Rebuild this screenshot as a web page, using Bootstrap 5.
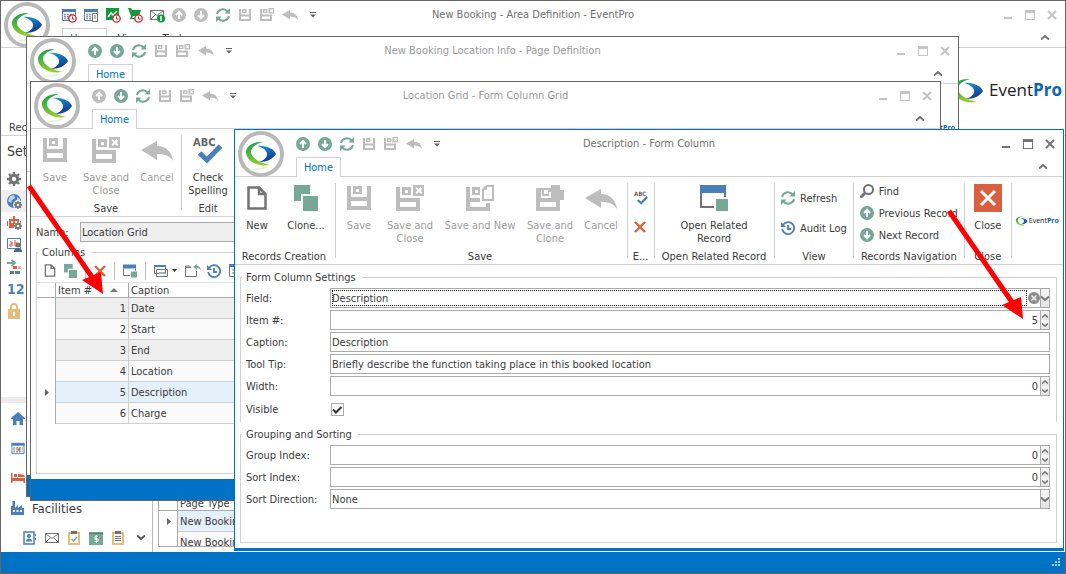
<!DOCTYPE html>
<html lang="en">
<head>
<meta charset="utf-8">
<meta name="viewport" content="width=device-width, initial-scale=1">
<title>EventPro</title>
<link href="https://cdn.jsdelivr.net/npm/bootstrap@5.3.0/dist/css/bootstrap.min.css" rel="stylesheet">
<style>
:root{--accent:#0072c6;--ink:#3b3b3b;--line:#d2d2d2;--edge:#ababab;--frame:#666;--blue:#4a80b8}
body{font-family:"DejaVu Sans Condensed","DejaVu Sans",sans-serif;font-size:11px;line-height:13px;color:var(--ink);overflow:hidden}
button{font:inherit;color:inherit;border:0;background:none;padding:0}
button:disabled{color:#9c9c9c}
svg{display:block;flex:none;overflow:visible}
.win{background:#fff;border:1px solid var(--frame)}
.win-area{position:relative}
.win-page{position:absolute;inset:35px 106px 76px 25px}
.win-grid{position:absolute;inset:80px 124px 72px 29px}
.win-form{position:absolute;inset:128px 1px 22px 233px;border-color:var(--accent)}
.orb{position:absolute;left:3px;top:1px}
.caption-bar{display:grid;grid-template-columns:1fr auto 1fr;align-items:center;height:27px}
.qat{padding-left:61px;gap:8px}
.win-title{color:#999;white-space:nowrap}
.win-ctl{gap:12px;padding-right:8px;color:#c4c4c4}
.win-area>.ribbon-head .win-title,.win-form .win-title{color:#707070}
.win-form .win-ctl{color:#737373}
.ribbon-head{border-bottom:1px solid var(--line)}
.tab-row{height:19px;padding:0 16px 0 61px}
.rtab{border:1px solid transparent;border-bottom:0;width:45px;height:20px;color:var(--ink)}
.rtab.active{border-color:var(--line);background:#fff;color:var(--accent)}
.ribbon{height:88px;border-bottom:1px solid var(--line)}
.rgroup{padding:8px 0 1px;position:relative}
.rgroup+.rgroup::before,.rgroup.ruled::after{content:"";position:absolute;left:0;top:6px;bottom:6px;width:1px;background:var(--line)}
.rgroup.ruled::after{left:auto;right:0}
.g-new,.g-save{padding-right:2px}
.g-edit{width:27px;padding-top:14px}
.g-view{padding-left:7px;padding-right:6px;padding-top:10px}
.g-nav{padding-left:7px;padding-right:6px;padding-top:3px}
.big{display:flex;flex-direction:column;align-items:center;gap:8px;text-align:center}
.big svg{height:26px}
.w-xs{width:44px}.w-s{width:48px}.w-m{width:54px}.w-l{width:86px}.w-xl{width:120px}
.rlabel{text-align:center;white-space:nowrap}
.line-btn{display:flex;align-items:center;gap:5px;height:22px;white-space:nowrap}
.status{height:21px;background:var(--accent)}
.status-thin{height:2px;background:var(--accent)}
.groupbox{border:1px solid var(--line);padding:4px 6px 0 5px;margin:6px 6px 0 5px;min-width:0}
.groupbox>legend{float:none;width:auto;font-size:11px;line-height:13px;margin:0 0 0 -4px;padding:0 6px 0 4px}
.groupbox .frow{margin-bottom:2px}
.columns-box{padding:0;margin-top:4px}
.columns-box>legend{margin-left:1px}
.form-foot{height:5px}
.frow{display:flex;align-items:center}
.frow>label{width:84px}
.check-row{height:22px}
.name-row{padding:5px 4px 0 5px}
.name-row>label{width:44px}
.name-row>.fbox{background:#efefef}
.fbox{flex:1;display:flex;height:20px;border:1px solid var(--edge);background:#fff;min-width:0}
.fbox input,.fbox select{flex:1;min-width:0;border:0;padding:0 1px;background:transparent;color:inherit;font:inherit;outline:0;appearance:none}
.fbox input.num{text-align:right;padding-right:2px}
.focused{outline:1px dotted #222!important;outline-offset:-2px!important}
.spin{width:9px;border-left:1px solid var(--edge);display:flex;flex-direction:column}
.spin button,.drop{display:flex;align-items:center;justify-content:center;flex:1;background:linear-gradient(#f6f6f6,#e4e4e4);color:#777}
.drop{flex:0 0 9px;border-left:1px solid var(--edge)}
.tick{appearance:none;width:13px;height:13px;margin:0 0 0 1px;border:1px solid var(--edge);background:#fff}
.tick-wrap{position:relative}
.tick-wrap svg{position:absolute;left:3px;top:3px;pointer-events:none}
.ctab{width:100%;border-collapse:separate;border-spacing:0;table-layout:fixed}
.ctab th{font-weight:400;height:15px;padding:0 2px;border-bottom:1px solid var(--edge);border-right:1px solid var(--edge);white-space:nowrap}
.ctab td{height:21px;padding:0 2px;border-bottom:1px solid #cfcfcf;border-right:1px solid #cfcfcf;background:#fafafa;white-space:nowrap}
.ctab td:first-child{background:#fff;border-bottom:0;border-right-color:var(--edge)}
.ctab tr.alt td:not(:first-child){background:#efefef}
.ctab tr.sel td:not(:first-child){background:#e4f0fa}
.ctab .mark-col{width:19px}.ctab .num-col{width:73px}
.gtools{height:23px;padding-left:7px}
.gtools .vr{width:1px;min-height:18px;background:#bbb;opacity:1;align-self:center}
.side{flex:0 0 152px;border-right:1px solid #bbb}
.side-head{font-size:14px;line-height:18px;padding:6px 6px 8px}
.side-item{height:22px;width:100%;padding-left:6px;display:flex;align-items:center}
.side-item.on{background:#efefef}
.split{height:6px;background:#ececec}
.mod{height:30px;padding-left:10px;gap:7px;font-size:13px;display:flex;align-items:center;width:100%}
.mod-bar{height:29px;padding-left:22px;gap:8px}
.book-grid{height:52px;overflow:hidden;border:1px solid var(--edge);margin:0 6px 5px 5px}
.brand{display:flex;align-items:center;font-family:"Open Sans",sans-serif;color:#222}
.brand b{color:#0b63b5}
.brand-lg{font-size:17px;line-height:26px;gap:5px;padding:0 3px 3px 0}
.brand-sm{font-size:7px;line-height:10px;gap:1px;padding:0 3px}
.twelve{font:bold 14px/16px "DejaVu Sans Condensed",sans-serif;color:var(--blue)}
.pointer{position:absolute;pointer-events:none}
.pointer-sort{left:-3px;top:103px}
.pointer-item{right:39px;top:80px}
</style>
</head>
<body>
<svg width="0" height="0" class="position-absolute" aria-hidden="true">
<defs>
<linearGradient id="gg" x1="0" y1="0" x2="0.3" y2="1"><stop offset="0" stop-color="#159c50"/><stop offset=".4" stop-color="#43b244"/><stop offset="1" stop-color="#93cd2a"/></linearGradient>
<linearGradient id="gb" x1="0" y1="0" x2="0.4" y2="1"><stop offset="0" stop-color="#169be0"/><stop offset="1" stop-color="#153a91"/></linearGradient>
<symbol id="swoosh" viewBox="6 10 33 25"><path fill="url(#gg)" d="M25 11C15 10 7 16 8 22c1 8 11 14 24 12-9-2-19-7-19-13 0-5 5-8 12-10z"/><path fill="url(#gb)" d="M19 15c9-1 17 3 19 8-3 5-9 8-17 8 5-2 8-4 8-8 0-4-5-7-10-8z"/></symbol>
<symbol id="orb" viewBox="0 0 46 46"><circle cx="23" cy="23" r="21" fill="#fff" stroke="#b9b9b9" stroke-width="4"/><path fill="#e4f3d2" d="M11 40c7-4 12-2 19-5-4 5-10 3-19 5z"/><path fill="url(#gg)" d="M25 11C15 10 7 16 8 22c1 8 11 14 24 12-9-2-19-7-19-13 0-5 5-8 12-10z"/><path fill="url(#gb)" d="M19 15c9-1 17 3 19 8-3 5-9 8-17 8 5-2 8-4 8-8 0-4-5-7-10-8z"/></symbol>
<symbol id="up" viewBox="0 0 14 14"><circle cx="7" cy="7" r="7" fill="currentColor"/><path d="M7 11V4M4 7l3-3 3 3" fill="none" stroke="#fff" stroke-width="2"/></symbol>
<symbol id="down" viewBox="0 0 14 14"><circle cx="7" cy="7" r="7" fill="currentColor"/><path d="M7 3v7M4 7l3 3 3-3" fill="none" stroke="#fff" stroke-width="2"/></symbol>
<symbol id="sync" viewBox="0 0 14 14"><path d="M1 6a6 6 0 0 1 10.500-2.500M13 8A6 6 0 0 1 2.500 10.500" fill="none" stroke="currentColor" stroke-width="2"/><path fill="currentColor" d="M14 0v5.500H8.500zM0 14V8.500h5.500z"/></symbol>
<symbol id="save" viewBox="0 0 24 24"><path fill="currentColor" fill-rule="evenodd" d="M0 0h4v11h16V0h4v24H0zM4 15v5h16v-5zM6 0h9v8H6zm3 3v3h3V3z"/></symbol>
<symbol id="saveclose" viewBox="0 0 28 26"><path fill="currentColor" fill-rule="evenodd" d="M0 2h4v11h20v13H0zM4 17v5h16v-5zM6 2h9v8H6zm3 3v3h3V5zM17 0h11v11H17zm2.500 3.500 2 2-2 2 1.500 1.500 2-2 2 2 1.500-1.500-2-2 2-2L24.500 2 22.500 4l-2-2z"/></symbol>
<symbol id="savenew" viewBox="0 0 28 26"><path fill="currentColor" fill-rule="evenodd" d="M0 2h4v11h10v4H4v5h16v-4h4v8H0zM6 2h8v8H6zm3 3v3h3V5zM20 0h8v16H16V4zm1 2v3h-3v9h8V2z"/></symbol>
<symbol id="saveclone" viewBox="0 0 28 26"><path fill="currentColor" fill-rule="evenodd" d="M0 3h15V0h9v5h5v10h-5v11H0zM4 17v5h16v-5zM5 5v8h10V7h-2v4H6V5zM8 5v4h4V5z"/></symbol>
<symbol id="undo" viewBox="0 0 32 20"><path fill="currentColor" d="M0 9 16 0v5c9 0 15 6 16 15-4-6-9-7-16-7v6z"/></symbol>
<symbol id="page" viewBox="0 0 20 24"><path fill="#fff" stroke="currentColor" stroke-width="2.500" d="M1.500 1.500H12L18.500 8v14.500h-17zM12 1.500V8h6.500"/></symbol>
<symbol id="clone" viewBox="0 0 24 26"><path fill="#77a797" d="M0 0h16v9H7v7H0zM9 11h15v15H9z"/></symbol>
<symbol id="related" viewBox="0 0 28 26"><path fill="#4a80b8" d="M0 0h26v8H0z"/><path fill="none" stroke="#737373" stroke-width="2" d="M1 8v14h13M25 8v4"/><path fill="#77a797" d="M16 14h12v12H16z"/></symbol>
<symbol id="cross" viewBox="0 0 12 12"><path d="M1 1l10 10M11 1 1 11" stroke="currentColor" stroke-width="2.400"/></symbol>
<symbol id="tick" viewBox="0 0 24 20"><path fill="none" stroke="#4a80b8" stroke-width="5" d="M1.500 9 9 16 22.500 2"/></symbol>
<symbol id="history" viewBox="0 0 14 14"><path d="M2 4a6 6 0 1 1-.8 4M7 4v4h3" fill="none" stroke="#4a80b8" stroke-width="1.800"/><path fill="#4a80b8" d="M0 1v5h5z"/></symbol>
<symbol id="find" viewBox="0 0 14 14"><circle cx="8.500" cy="5.500" r="4.500" fill="none" stroke="#737373" stroke-width="2"/><path d="M5 9l-4.500 4.500" stroke="#737373" stroke-width="3"/></symbol>
<symbol id="caret" viewBox="0 0 6 6"><path fill="#666" d="M0 0h6v1H0zM0 2.500h6L3 5.500z"/></symbol>
<symbol id="min" viewBox="0 0 10 10"><path fill="currentColor" d="M1 7h8v2H1z"/></symbol>
<symbol id="max" viewBox="0 0 10 10"><path fill="currentColor" fill-rule="evenodd" d="M0 0h10v10H0zM1 3v6h8V3z"/></symbol>
<symbol id="shut" viewBox="0 0 10 10"><path d="M1 1l8 8M9 1 1 9" stroke="currentColor" stroke-width="2"/></symbol>
<symbol id="chup" viewBox="0 0 8 5"><path d="M0 4.500l4-3.500 4 3.500" fill="none" stroke="currentColor" stroke-width="2"/></symbol>
<symbol id="chdn" viewBox="0 0 8 5"><path d="M0 .5 4 4 8 .5" fill="none" stroke="currentColor" stroke-width="2"/></symbol>
<symbol id="cal" viewBox="0 0 14 14"><path fill="#fff" stroke="#4a80b8" d="M.5 1.500h13v11H.5z"/><path fill="#4a80b8" d="M0 1h14v3H0z"/><path stroke="#999" stroke-width="1.500" stroke-dasharray="2 1" d="M2 6.500h10M2 8.500h10M2 10.500h10"/></symbol>
<symbol id="clk" viewBox="0 0 9 9"><circle cx="4.500" cy="4.500" r="3.700" fill="#fff" stroke="#d81e2c" stroke-width="1.300"/><path d="M4.500 2.500v2.500h2" fill="none" stroke="#555"/></symbol>
<symbol id="gear" viewBox="0 0 14 14"><circle cx="7" cy="7" r="3.700" fill="none" stroke="currentColor" stroke-width="3"/><path stroke="currentColor" stroke-width="2.400" d="M7 0v3M7 11v3M0 7h3M11 7h3M2 2l2 2M10 10l2 2M12 2l-2 2M4 10l-2 2"/></symbol>
<symbol id="marker" viewBox="0 0 4 7"><path fill="#666" d="M0 0l4 3.500L0 7z"/></symbol>
<symbol id="clip" viewBox="0 0 12 14"><path fill="#fff" stroke="#e6bd78" stroke-width="2" d="M1 2h10v11H1z"/><path fill="#737373" d="M3 0h6v3H3z"/></symbol>
</defs>
</svg>

<main class="win win-area min-vh-100 d-flex flex-column">
  <header class="ribbon-head">
    <svg class="orb" width="46" height="46"><use href="#orb"/></svg>
    <div class="caption-bar">
      <div class="qat d-flex align-items-center">
        <button aria-label="Recent bookings"><svg width="14" height="14"><use href="#cal"/><use href="#clk" x="6" y="6" width="9" height="9"/></svg></button>
        <button aria-label="Calendar list"><svg width="14" height="14"><use href="#cal"/><path fill="#fff" stroke="#737373" d="M8.500 5.500h5v8h-5zM10 8h2M10 10h2"/></svg></button>
        <button aria-label="Recent reports"><svg width="14" height="14"><path fill="#0f9a3c" d="M0 0h13v12H0z"/><path d="M2 9l3-4 2 2 4-4" fill="none" stroke="#fff" stroke-width="1.500"/><use href="#clk" x="6" y="6" width="9" height="9"/></svg></button>
        <button aria-label="Recent orders"><svg width="14" height="14"><path fill="#0f9a3c" d="M0 0h3l1 2h9l-2 6H5l-1 2h5v1H2l1-3z"/><use href="#clk" x="6" y="6" width="9" height="9"/></svg></button>
        <button aria-label="Messages"><svg width="14" height="14"><path fill="#fff" stroke="#737373" d="M.5 2.500h13v9H.5zl6.500 5 6.500-5M.5 11.500 5 7M13.500 11.500 9 7"/><circle cx="11" cy="10.500" r="4" fill="#0f9a3c"/><path stroke="#fff" stroke-width="1.500" d="M11 8v5"/></svg></button>
        <button disabled aria-label="Previous"><svg width="14" height="14" color="#bdbdbd"><use href="#up"/></svg></button>
        <button disabled aria-label="Next"><svg width="14" height="14" color="#bdbdbd"><use href="#down"/></svg></button>
        <button aria-label="Refresh"><svg width="14" height="14" color="#77a797"><use href="#sync"/></svg></button>
        <button disabled aria-label="Save"><svg width="14" height="12" color="#bdbdbd"><use href="#save"/></svg></button>
        <button disabled aria-label="Save and close"><svg width="14" height="13" color="#bdbdbd"><use href="#saveclose"/></svg></button>
        <button disabled aria-label="Undo"><svg width="16" height="10" color="#bdbdbd"><use href="#undo"/></svg></button>
        <button class="ms-1" aria-label="Customise"><svg width="6" height="6"><use href="#caret"/></svg></button>
      </div>
      <div class="win-title">New Booking - Area Definition - EventPro</div>
      <div class="win-ctl d-flex justify-content-end">
        <button aria-label="Minimise"><svg width="10" height="10"><use href="#min"/></svg></button>
        <button aria-label="Maximise"><svg width="10" height="10"><use href="#max"/></svg></button>
        <button aria-label="Close"><svg width="10" height="10"><use href="#shut"/></svg></button>
      </div>
    </div>
    <div class="tab-row d-flex align-items-center">
      <button class="rtab active">Home</button><button class="rtab">View</button><button class="rtab">Tools</button>
      <button class="ms-auto" aria-label="Collapse ribbon"><svg width="8" height="5" color="#737373"><use href="#chup"/></svg></button>
    </div>
  </header>
  <div class="ribbon d-flex justify-content-between">
    <div class="rgroup d-flex flex-column justify-content-end ps-2"><div class="rlabel">Records</div></div>
    <div class="brand brand-lg"><svg width="33" height="25"><use href="#swoosh"/></svg><span>Event<b>Pro</b></span></div>
  </div>
  <div class="d-flex flex-grow-1">
    <nav class="side d-flex flex-column">
      <div class="side-head">Setup</div>
      <button class="side-item" aria-label="Settings"><svg width="14" height="14" color="#737373"><use href="#gear"/></svg></button>
      <button class="side-item on" aria-label="Global settings"><svg width="15" height="15"><circle cx="7" cy="7" r="7" fill="#4a80b8"/><path fill="#bcd3e8" d="M3 2l4-1 1 3-3 2-1 3-3-2zM10 3l3 2v3l-3-1z"/><circle cx="11" cy="11" r="5" fill="#efefef"/><use href="#gear" x="7" y="7" width="8" height="8" color="#737373"/></svg></button>
      <button class="side-item" aria-label="Automation"><svg width="15" height="14"><path fill="#d9603f" d="M3 3h3V0h2v3h4v9H2V3zM0 5h1v5H0zM13 5h1v5h-1z"/><path fill="#fff" d="M4 5h2v2H4zM8 5h2v2H8z"/><circle cx="11" cy="10" r="4" fill="#fff"/><use href="#gear" x="7" y="6" width="8" height="8" color="#737373"/></svg></button>
      <button class="side-item" aria-label="User text"><svg width="15" height="14"><path fill="#fff" stroke="#4a80b8" d="M.5.500h13v10H.5z"/><path d="M3 4h2v4H3V6h2M8 2v6h2V5H8" fill="none" stroke="#d9603f"/><circle cx="11" cy="7" r="2.500" fill="#737373"/><path fill="#4a6a8c" d="M7 14q0-4 4-4t4 4z"/></svg></button>
      <button class="side-item" aria-label="Workflow"><svg width="14" height="14"><path d="M0 3h7M4.500 0 8 3 4.500 6" fill="none" stroke="#77a797" stroke-width="1.800"/><path fill="#d9603f" d="M6 6h4v3H6z"/><path fill="#e6bd78" d="M11 6h3v3h-3z"/><path fill="#737373" d="M3 11h4v3H3z"/><path fill="#4a80b8" d="M8 11h5v3H8z"/></svg></button>
      <button class="side-item twelve">12</button>
      <button class="side-item" aria-label="Security"><svg width="14" height="16"><path fill="#e6bd78" d="M1 6h12v10H1z"/><path d="M4 7V4q0-3 3-3t3 3v3" fill="none" stroke="#e6bd78" stroke-width="2"/><path fill="#fff" d="M6 9h2v4H6z"/></svg></button>
      <div class="split mt-auto"></div>
      <button class="mod" aria-label="Home"><svg width="14" height="13"><path fill="#4a80b8" d="M7 0l7 6v1h-2v6H8.500V9h-3v4H2V7H0V6z"/></svg></button>
      <button class="mod" aria-label="Calendar"><svg width="14" height="13"><use href="#cal"/><circle cx="8" cy="7.500" r="1.300" fill="#d9603f"/></svg></button>
      <button class="mod" aria-label="Housing"><svg width="14" height="10"><path fill="#d9603f" d="M0 0h1.500v5H14v5h-1.500V8h-11v2H0zM3 1h3v3H3zM7 1q7 0 7 3H7z"/></svg></button>
      <button class="mod"><svg width="14" height="14"><path fill="#4a80b8" fill-rule="evenodd" d="M0 5h1.500V0H4v7l3-3v3l4-3v3h2v7H0zM2 9v2h2V9zM5.500 9v2h2V9zM9 9v2h2V9z"/></svg>Facilities</button>
      <div class="mod-bar d-flex align-items-center">
        <button aria-label="Contacts"><svg width="14" height="14"><path fill="#fff" stroke="#4a80b8" stroke-width="1.500" d="M1 1h10v12H1z"/><circle cx="6" cy="5" r="2" fill="#4a80b8"/><path fill="#4a80b8" d="M3 10.500q0-3 3-3t3 3zM12 3h1v2h-1zM12 7h1v2h-1z"/></svg></button>
        <button aria-label="Mail"><svg width="14" height="14"><path fill="#fff" stroke="#737373" d="M.5 2.500h13v9H.5zl6.500 5 6.500-5M.5 11.500 5 7M13.500 11.500 9 7"/></svg></button>
        <button aria-label="Tasks"><svg width="14" height="14"><use href="#clip"/><path d="M4.500 8l2 2 3.500-4" fill="none" stroke="#77a797" stroke-width="1.500"/></svg></button>
        <button aria-label="Accounting"><svg width="14" height="14"><path fill="#77a797" d="M0 1h14v13H0z"/><path stroke="#4f7d6d" d="M0 2.500h14"/><path d="M9 5.500H6v2.500h3v2.500H5.500M7.300 4v8" fill="none" stroke="#fff"/></svg></button>
        <button aria-label="Reports"><svg width="14" height="14"><use href="#clip"/><path stroke="#737373" d="M4 5.500h6M4 7.500h6M4 9.500h6"/></svg></button>
        <button class="ms-1" aria-label="More"><svg width="8" height="5" color="#555"><use href="#chdn"/></svg></button>
      </div>
    </nav>
    <section class="flex-grow-1 d-flex flex-column">
      <div class="flex-grow-1"></div>
      <div class="book-grid">
        <table class="ctab">
          <colgroup><col class="mark-col"><col></colgroup>
          <thead><tr><th></th><th>Page Type</th></tr></thead>
          <tbody>
            <tr class="sel"><td class="ps-2"><svg width="4" height="7"><use href="#marker"/></svg></td><td>New Booking</td></tr>
            <tr><td></td><td>New Booking</td></tr>
          </tbody>
        </table>
      </div>
    </section>
  </div>
  <footer class="status d-flex justify-content-end align-items-center pe-1">
    <svg width="9" height="9" fill="#a9c9e4"><path d="M6 0h2v2H6zM3 3h2v2H3zM6 3h2v2H6zM0 6h2v2H0zM3 6h2v2H3zM6 6h2v2H6z"/></svg>
  </footer>

  <section class="win win-page d-flex flex-column">
    <header class="ribbon-head">
      <svg class="orb" width="46" height="46"><use href="#orb"/></svg>
      <div class="caption-bar">
        <div class="qat d-flex align-items-center">
          <button aria-label="Previous"><svg width="14" height="14" color="#77a797"><use href="#up"/></svg></button>
          <button aria-label="Next"><svg width="14" height="14" color="#77a797"><use href="#down"/></svg></button>
          <button aria-label="Refresh"><svg width="14" height="14" color="#77a797"><use href="#sync"/></svg></button>
          <button disabled aria-label="Save"><svg width="14" height="12" color="#bdbdbd"><use href="#save"/></svg></button>
          <button disabled aria-label="Save and close"><svg width="14" height="13" color="#bdbdbd"><use href="#saveclose"/></svg></button>
          <button disabled aria-label="Undo"><svg width="16" height="10" color="#bdbdbd"><use href="#undo"/></svg></button>
          <button class="ms-1" aria-label="Customise"><svg width="6" height="6"><use href="#caret"/></svg></button>
        </div>
        <div class="win-title">New Booking Location Info - Page Definition</div>
        <div class="win-ctl d-flex justify-content-end">
          <button aria-label="Minimise"><svg width="10" height="10"><use href="#min"/></svg></button>
          <button aria-label="Maximise"><svg width="10" height="10"><use href="#max"/></svg></button>
          <button aria-label="Close"><svg width="10" height="10"><use href="#shut"/></svg></button>
        </div>
      </div>
      <div class="tab-row d-flex align-items-center">
        <button class="rtab active">Home</button>
        <button class="ms-auto" aria-label="Collapse ribbon"><svg width="8" height="5" color="#737373"><use href="#chup"/></svg></button>
      </div>
    </header>
    <div class="ribbon d-flex justify-content-end">
      <div class="brand brand-sm"><svg width="13" height="10"><use href="#swoosh"/></svg><span>Event<b>Pro</b></span></div>
    </div>
    <footer class="status mt-auto"></footer>
  </section>

  <section class="win win-grid d-flex flex-column">
    <header class="ribbon-head">
      <svg class="orb" width="46" height="46"><use href="#orb"/></svg>
      <div class="caption-bar">
        <div class="qat d-flex align-items-center">
          <button disabled aria-label="Previous"><svg width="14" height="14" color="#bdbdbd"><use href="#up"/></svg></button>
          <button aria-label="Next"><svg width="14" height="14" color="#77a797"><use href="#down"/></svg></button>
          <button aria-label="Refresh"><svg width="14" height="14" color="#77a797"><use href="#sync"/></svg></button>
          <button disabled aria-label="Save"><svg width="14" height="12" color="#bdbdbd"><use href="#save"/></svg></button>
          <button disabled aria-label="Save and close"><svg width="14" height="13" color="#bdbdbd"><use href="#saveclose"/></svg></button>
          <button disabled aria-label="Undo"><svg width="16" height="10" color="#bdbdbd"><use href="#undo"/></svg></button>
          <button class="ms-1" aria-label="Customise"><svg width="6" height="6"><use href="#caret"/></svg></button>
        </div>
        <div class="win-title">Location Grid - Form Column Grid</div>
        <div class="win-ctl d-flex justify-content-end">
          <button aria-label="Minimise"><svg width="10" height="10"><use href="#min"/></svg></button>
          <button aria-label="Maximise"><svg width="10" height="10"><use href="#max"/></svg></button>
          <button aria-label="Close"><svg width="10" height="10"><use href="#shut"/></svg></button>
        </div>
      </div>
      <div class="tab-row d-flex align-items-center">
        <button class="rtab active">Home</button>
        <button class="ms-auto" aria-label="Collapse ribbon"><svg width="8" height="5" color="#737373"><use href="#chup"/></svg></button>
      </div>
    </header>
    <div class="ribbon d-flex">
      <div class="rgroup d-flex flex-column justify-content-between">
        <div class="d-flex align-items-start">
          <button disabled class="big w-s"><svg width="24" color="#bdbdbd"><use href="#save" y="1" width="24" height="24"/></svg>Save</button>
          <button disabled class="big w-m"><svg width="28" color="#bdbdbd"><use href="#saveclose" width="28" height="26"/></svg>Save and Close</button>
          <button disabled class="big w-s"><svg width="32" color="#bdbdbd"><use href="#undo" y="4" width="32" height="20"/></svg>Cancel</button>
        </div>
        <div class="rlabel">Save</div>
      </div>
      <div class="rgroup d-flex flex-column justify-content-between">
        <button class="big w-m"><svg width="30"><text y="9" font-size="11" font-weight="bold" fill="#666">ABC</text><use href="#tick" x="5" y="7" width="24" height="20"/></svg>Check Spelling</button>
        <div class="rlabel">Edit</div>
      </div>
    </div>
    <div class="frow name-row">
      <label for="gname">Name:</label>
      <div class="fbox"><input id="gname" value="Location Grid"></div>
    </div>
    <fieldset class="groupbox flex-grow-1 columns-box">
      <legend>Columns</legend>
      <div class="gtools d-flex align-items-center">
        <button class="me-2" aria-label="New"><svg width="12" height="13" color="#737373"><use href="#page"/></svg></button>
        <button aria-label="Clone"><svg width="13" height="14"><use href="#clone"/></svg></button>
        <span class="vr mx-2"></span>
        <button aria-label="Delete"><svg width="12" height="12" color="#d9603f"><use href="#cross"/></svg></button>
        <span class="vr mx-2"></span>
        <button aria-label="Open related"><svg width="14" height="14"><use href="#related"/></svg></button>
        <span class="vr mx-2"></span>
        <button class="d-flex align-items-center gap-1" aria-label="Layouts"><svg width="14" height="12"><path fill="#fff" stroke="#737373" d="M.5 1.500h11v7H.5zM2.500 4.500h11v7h-11z"/><path fill="#4a80b8" d="M0 0h12v2H0z"/><path fill="#9ab6d2" d="M5 7h6v2H5z"/></svg><svg width="5" height="3"><path fill="#333" d="M0 0h5L2.500 3z"/></svg></button>
        <button class="ms-2" aria-label="Export"><svg width="14" height="13"><path d="M6 3.500H.5v9h11V7M.5 3.500V2h4l1.500 1.500" fill="none" stroke="#737373"/><path fill="#77a797" d="M8 3l4-3v2q3 0 4 4-2-2-4-2v2z"/></svg></button>
        <button class="ms-2" aria-label="Audit log"><svg width="14" height="14"><use href="#history"/></svg></button>
        <button class="ms-2" aria-label="Columns"><svg width="14" height="13"><path fill="#fff" stroke="#737373" d="M.5.500h12v12H.5z"/><path fill="#4a80b8" d="M0 0h13v3H0z"/><path stroke="#737373" d="M3 6h3M3 9h3"/></svg></button>
      </div>
      <table class="ctab border-top">
        <colgroup><col class="mark-col"><col class="num-col"><col></colgroup>
        <thead><tr><th></th><th><span class="d-flex align-items-center">Item #<svg class="ms-auto me-2" width="8" height="4"><path fill="#777" d="M0 4h8L4 0z"/></svg></span></th><th>Caption</th></tr></thead>
        <tbody>
          <tr class="alt"><td></td><td class="text-end">1</td><td>Date</td></tr>
          <tr><td></td><td class="text-end">2</td><td>Start</td></tr>
          <tr class="alt"><td></td><td class="text-end">3</td><td>End</td></tr>
          <tr><td></td><td class="text-end">4</td><td>Location</td></tr>
          <tr class="sel"><td class="ps-2"><svg width="4" height="7"><use href="#marker"/></svg></td><td class="text-end">5</td><td>Description</td></tr>
          <tr><td></td><td class="text-end">6</td><td>Charge</td></tr>
        </tbody>
      </table>
    </fieldset>
    <div class="form-foot"></div>
    <footer class="status"></footer>
    <svg class="pointer pointer-sort" width="76" height="110"><path d="M1 1 66 95" stroke="red" stroke-width="5"/><path fill="red" d="M75 109 54 95 73 87z"/></svg>
  </section>

  <section class="win win-form d-flex flex-column">
    <header class="ribbon-head">
      <svg class="orb" width="46" height="46"><use href="#orb"/></svg>
      <div class="caption-bar">
        <div class="qat d-flex align-items-center">
          <button aria-label="Previous"><svg width="14" height="14" color="#77a797"><use href="#up"/></svg></button>
          <button aria-label="Next"><svg width="14" height="14" color="#77a797"><use href="#down"/></svg></button>
          <button aria-label="Refresh"><svg width="14" height="14" color="#77a797"><use href="#sync"/></svg></button>
          <button disabled aria-label="Save"><svg width="14" height="12" color="#bdbdbd"><use href="#save"/></svg></button>
          <button disabled aria-label="Save and close"><svg width="14" height="13" color="#bdbdbd"><use href="#saveclose"/></svg></button>
          <button disabled aria-label="Undo"><svg width="16" height="10" color="#bdbdbd"><use href="#undo"/></svg></button>
          <button class="ms-1" aria-label="Customise"><svg width="6" height="6"><use href="#caret"/></svg></button>
        </div>
        <div class="win-title">Description - Form Column</div>
        <div class="win-ctl d-flex justify-content-end">
          <button aria-label="Minimise"><svg width="10" height="10"><use href="#min"/></svg></button>
          <button aria-label="Maximise"><svg width="10" height="10"><use href="#max"/></svg></button>
          <button aria-label="Close"><svg width="10" height="10"><use href="#shut"/></svg></button>
        </div>
      </div>
      <div class="tab-row d-flex align-items-center">
        <button class="rtab active">Home</button>
        <button class="ms-auto" aria-label="Collapse ribbon"><svg width="8" height="5" color="#737373"><use href="#chup"/></svg></button>
      </div>
    </header>
    <div class="ribbon d-flex">
      <div class="rgroup g-new d-flex flex-column justify-content-between">
        <div class="d-flex align-items-start">
          <button class="big w-xs"><svg width="20" color="#737373"><use href="#page" y="1" width="20" height="24"/></svg>New</button>
          <button class="big w-m"><svg width="24"><use href="#clone" width="24" height="26"/></svg>Clone...</button>
        </div>
        <div class="rlabel">Records Creation</div>
      </div>
      <div class="rgroup g-save d-flex flex-column justify-content-between">
        <div class="d-flex align-items-start">
          <button disabled class="big w-s"><svg width="24" color="#bdbdbd"><use href="#save" y="1" width="24" height="24"/></svg>Save</button>
          <button disabled class="big w-m"><svg width="28" color="#bdbdbd"><use href="#saveclose" width="28" height="26"/></svg>Save and Close</button>
          <button disabled class="big w-l"><svg width="28" color="#bdbdbd"><use href="#savenew" width="28" height="26"/></svg>Save and New</button>
          <button disabled class="big w-m"><svg width="28" color="#bdbdbd"><use href="#saveclone" width="28" height="26"/></svg>Save and Clone</button>
          <button disabled class="big w-s"><svg width="32" color="#bdbdbd"><use href="#undo" y="4" width="32" height="20"/></svg>Cancel</button>
        </div>
        <div class="rlabel">Save</div>
      </div>
      <div class="rgroup g-edit d-flex flex-column justify-content-between align-items-center">
        <div class="d-flex flex-column gap-3">
          <button aria-label="Check spelling"><svg width="14" height="14"><text y="5" font-size="6" font-weight="bold" fill="#666">ABC</text><use href="#tick" x="3" y="5" width="11" height="9"/></svg></button>
          <button aria-label="Delete"><svg width="12" height="12" color="#d9603f"><use href="#cross"/></svg></button>
        </div>
        <div class="rlabel">E...</div>
      </div>
      <div class="rgroup d-flex flex-column justify-content-between">
        <button class="big w-xl"><svg width="28"><use href="#related" width="28" height="26"/></svg><span>Open Related<br>Record</span></button>
        <div class="rlabel">Open Related Record</div>
      </div>
      <div class="rgroup g-view d-flex flex-column justify-content-between">
        <div class="d-flex flex-column gap-2">
          <button class="line-btn"><svg width="14" height="14" color="#77a797"><use href="#sync"/></svg>Refresh</button>
          <button class="line-btn"><svg width="14" height="14"><use href="#history"/></svg>Audit Log</button>
        </div>
        <div class="rlabel">View</div>
      </div>
      <div class="rgroup g-nav d-flex flex-column justify-content-between">
        <div class="d-flex flex-column">
          <button class="line-btn"><svg width="14" height="14"><use href="#find"/></svg>Find</button>
          <button class="line-btn"><svg width="14" height="14" color="#77a797"><use href="#up"/></svg>Previous Record</button>
          <button class="line-btn"><svg width="14" height="14" color="#77a797"><use href="#down"/></svg>Next Record</button>
        </div>
        <div class="rlabel">Records Navigation</div>
      </div>
      <div class="rgroup ruled d-flex flex-column justify-content-between">
        <button class="big w-s"><svg width="28"><path fill="#d9603f" d="M0-1h28v28H0z"/><path d="M7 6l14 14M21 6 7 20" stroke="#fff" stroke-width="3"/></svg>Close</button>
        <div class="rlabel">Close</div>
      </div>
      <div class="brand brand-sm"><svg width="13" height="10"><use href="#swoosh"/></svg><span>Event<b>Pro</b></span></div>
    </div>
    <fieldset class="groupbox border-bottom-0">
      <legend>Form Column Settings</legend>
      <div class="frow"><label for="f1">Field:</label>
        <div class="fbox"><select id="f1" class="focused"><option>Description</option></select>
          <button aria-label="Clear"><svg width="12" height="12"><circle cx="6" cy="6" r="6" fill="#8c8c8c"/><path d="M3.500 3.500l5 5M8.500 3.500l-5 5" stroke="#fff" stroke-width="1.500"/></svg></button>
          <span class="drop"><svg width="8" height="5"><use href="#chdn"/></svg></span></div></div>
      <div class="frow"><label for="f2">Item #:</label>
        <div class="fbox"><input id="f2" class="num" value="5"><span class="spin"><button aria-label="Increase"><svg width="6" height="4"><use href="#chup"/></svg></button><button aria-label="Decrease"><svg width="6" height="4"><use href="#chdn"/></svg></button></span></div></div>
      <div class="frow"><label for="f3">Caption:</label><div class="fbox"><input id="f3" value="Description"></div></div>
      <div class="frow"><label for="f4">Tool Tip:</label><div class="fbox"><input id="f4" value="Briefly describe the function taking place in this booked location"></div></div>
      <div class="frow"><label for="f5">Width:</label>
        <div class="fbox"><input id="f5" class="num" value="0"><span class="spin"><button aria-label="Increase"><svg width="6" height="4"><use href="#chup"/></svg></button><button aria-label="Decrease"><svg width="6" height="4"><use href="#chdn"/></svg></button></span></div></div>
      <div class="frow check-row"><label for="f6">Visible</label>
        <span class="tick-wrap d-flex"><input id="f6" type="checkbox" class="tick" checked><svg width="9" height="8"><path d="M0 3.500 3 6.500 8.500 1" fill="none" stroke="#333" stroke-width="2"/></svg></span></div>
    </fieldset>
    <fieldset class="groupbox flex-grow-1">
      <legend>Grouping and Sorting</legend>
      <div class="frow"><label for="f7">Group Index:</label>
        <div class="fbox"><input id="f7" class="num" value="0"><span class="spin"><button aria-label="Increase"><svg width="6" height="4"><use href="#chup"/></svg></button><button aria-label="Decrease"><svg width="6" height="4"><use href="#chdn"/></svg></button></span></div></div>
      <div class="frow"><label for="f8">Sort Index:</label>
        <div class="fbox"><input id="f8" class="num" value="0"><span class="spin"><button aria-label="Increase"><svg width="6" height="4"><use href="#chup"/></svg></button><button aria-label="Decrease"><svg width="6" height="4"><use href="#chdn"/></svg></button></span></div></div>
      <div class="frow"><label for="f9">Sort Direction:</label>
        <div class="fbox"><select id="f9"><option>None</option></select><span class="drop"><svg width="8" height="5"><use href="#chdn"/></svg></span></div></div>
    </fieldset>
    <div class="form-foot"></div>
    <footer class="status-thin"></footer>
    <svg class="pointer pointer-item" width="76" height="110"><path d="M1 1 66 95" stroke="red" stroke-width="5"/><path fill="red" d="M75 109 54 95 73 87z"/></svg>
  </section>
</main>
<script src="https://cdn.jsdelivr.net/npm/bootstrap@5.3.0/dist/js/bootstrap.bundle.min.js"></script>
</body>
</html>
